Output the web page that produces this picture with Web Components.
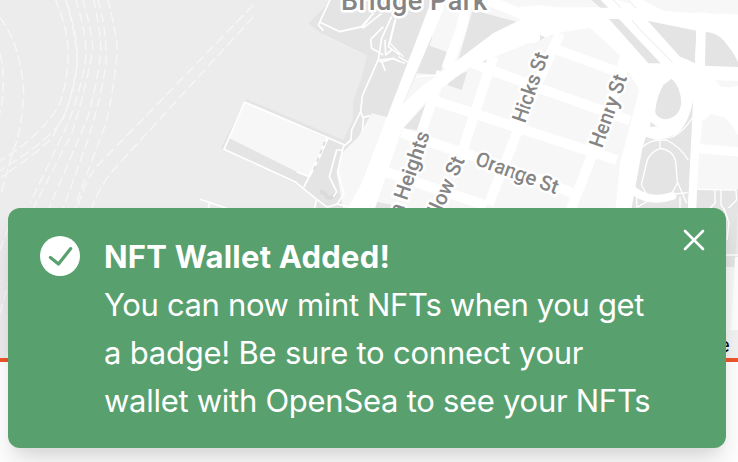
<!DOCTYPE html>
<html lang="en"><head><meta charset="utf-8"><title>Wallet notification</title>
<style>html,body{margin:0;width:738px;height:462px;overflow:hidden;background:#fff}</style></head>
<body>
<app-screen><street-map slot="map"></street-map>
<toast-message slot="toast"><span slot="title">NFT Wallet Added!</span><toast-line style="--ls:-.35px">You can now mint NFTs when you get</toast-line><toast-line style="--ls:-.22px">a badge! Be sure to connect your</toast-line><toast-line style="--ls:-.28px">wallet with OpenSea to see your NFTs</toast-line></toast-message>
</app-screen>
<script>
const define=(name,html)=>customElements.define(name,class extends HTMLElement{
  constructor(){super();this.attachShadow({mode:'open'}).innerHTML=html}
});
define('app-screen',`<style>:host{display:block;position:relative;width:738px;height:462px;overflow:hidden;background:#fff}
.map{height:358px;overflow:hidden}.rule{height:4px;background:#ee562b}.toast{position:absolute;left:8px;top:208px}</style>
<div class="map"><slot name="map"></slot></div><div class="rule"></div><div class="toast"><slot name="toast"></slot></div>`);
define('toast-line',`<style>:host{display:block;white-space:nowrap;letter-spacing:var(--ls)}</style><slot></slot>`);
define('toast-message',`<style>:host{display:grid;grid-template-columns:40px 1fr 24px;column-gap:24px;box-sizing:border-box;width:718px;height:240px;padding:25px 20px 23px 32px;border-radius:12px;background:#59a06f;color:#fff;font:400 31px/48px Inter,sans-serif;box-shadow:0 20px 30px -4px rgba(0,0,0,.12),0 8px 12px -4px rgba(0,0,0,.06)}
.icon{margin-top:3px;width:40px;height:40px}.title{font-weight:700;font-size:31px;letter-spacing:.24px;white-space:nowrap;height:48px}
.copy{min-width:0}button{all:unset;width:24px;height:24px;margin-top:-5px;}svg{display:block}</style>
<svg class="icon" viewBox="0 0 40 40"><circle cx="20" cy="20" r="20" fill="#fff"/><path d="M10.4 21.4 18.5 28 30.7 12.6" fill="none" stroke="#59a06f" stroke-width="3.2" stroke-linecap="round" stroke-linejoin="round"/></svg>
<div class="copy"><div class="title"><slot name="title"></slot></div><slot></slot></div>
<button aria-label="Close"><svg width="24" height="24" viewBox="0 0 24 24"><path d="M3 3 21 21M21 3 3 21" stroke="#fff" stroke-width="2.6" stroke-linecap="round"/></svg></button>`);
define('street-map',`<style>:host{display:block;width:738px;height:358px;background:#ececec}svg{display:block}
.p{fill:#e4e4e4}.l{fill:#f7f7f7}.w{fill:#fff}.r{fill:none;stroke:#fff;stroke-linejoin:round}.t{stroke-width:4}.d{fill:none;stroke:#f7f7f7;stroke-width:4;stroke-dasharray:30 13}
text{font-family:Roboto,sans-serif;font-weight:500;fill:#858585;stroke:#fff;stroke-width:5;stroke-linejoin:round;paint-order:stroke}</style>
<svg width="738" height="358" viewBox="0 0 738 358">
<g transform="scale(.33333)">
<g class="d">
<path d="M165-5Q210 100 204 180Q200 260 175 320Q110 420 0 482"/>
<path d="M195-5Q225 85 232 180Q228 260 190 355Q150 420 0 512"/>
<path d="M201 10Q235 110 232 190Q220 270 195 340L155 415Q110 460 5 530"/>
<path d="M226-5Q260 100 258 170Q240 290 195 390L90 610"/>
<path d="M247-5Q280 110 278 150Q250 300 215 400L95 635"/>
<path d="M280-5Q305 110 302 160Q290 260 262 355L145 630"/>
<path d="M293-5Q322 100 318 190Q300 310 260 430L188 630"/>
<path d="M322-5Q350 100 352 150Q340 280 318 370L235 590 225 630"/>
<path d="M0 52Q60 130 71 270Q65 400 40 450L0 590M0 160Q20 240 0 340"/>
<path d="M760 15 290 500Q250 550 232 630M760 50 340 510Q290 570 272 640"/>
<path d="M0 750 40 640M0 940 45 780M20 1075 50 980"/>
</g></g>
<g transform="translate(200) scale(.33333)">
<path class="p" d="M395 0 325 70 370 105 500 172 483 240 460 300 458 360 430 420 140 297 62 445 285 550 350 600 350 640 800 640 800 0Z"/>
<path d="M370 105 500 168" stroke="#f3f3f3" stroke-width="3"/>
<path class="l" d="M134 306 382 416 327 530 290 515 88 415Z"/>
<path class="r t" style="stroke-width:5" d="M436 436 134 306 72 448 285 545 350 598 382 622M330 525 311 562M290 515 327 530"/>
<path d="M382 416 358 470 327 530" fill="none" stroke="#fff" stroke-width="8"/><path d="M375 425 340 512" stroke="#dedede" stroke-width="6" stroke-dasharray="13 13"/>
<path d="M360 575Q375 575 380 590Q395 600 407 580" fill="none" stroke="#dadada" stroke-width="12"/>
<path class="l" d="M515 340 800 410 800 640 432 640 410 520 425 460 475 410Z"/>
<path class="r t" style="stroke-width:5" d="M390 0 355 75 370 92M360 67 420 95 488 80 520 40M488 85 545 40M575 50 545 115 535 178 487 288 482 335 455 390 453 420 430 440 413 515 432 580 412 612 382 622M425 450 410 450 388 530 410 575 400 590M482 335 490 355 487 395M488 353 510 347M550 80 512 118 515 145 550 165M585 60 565 140 600 165M555 120 557 165 575 150M535 180 545 186 580 175 600 185M545 185 556 213M412 612 442 620M0 598 80 625M30 606 23 630M350 600 342 630"/>
</g>
<g transform="translate(340) scale(.33333)">
<path class="l" d="M285 0H1200V640H80L190 310 275 120Z"/>
<path class="p" d="M263 135 320 155 300 225 232 220ZM398 30 530 65 460 100 355 180ZM322 255 345 225 382 215 365 270ZM278 290 190 385 250 392ZM402 190 450 172 440 203ZM195 410 245 400 240 415ZM110 605 185 620 180 640H100Z"/>
<path class="w" d="M275 0H318L303 45 275 110 188 312 245 260 340 190 460 100 530 65 600 40V110L530 145 450 175 385 205 270 290 185 390 100 640H15L65 550Z"/>
<path class="r" style="stroke-width:32" d="M382 0 363 90 320 205"/>
<path class="r" style="stroke-width:30" d="M430-5 600 65M305 215 245 395M460 170 370 445M660 100 570 300 445 615M400 190 600 265 870 362M285 302 600 405 830 480M185 398 270 427 420 475M590 535 700 580M135 515 440 617"/>
<path class="r" style="stroke-width:4" d="M175 170 210 190M228 233 240 229 300 225M120 180 155 175 195 190M170 45 150 130 190 170M100 40 65 78M0 94 65 80"/>
</g>
<g transform="translate(540) scale(.33333)">
<path class="w" d="M-60 20 0 16 60 22 155 0H310L370 32 600 42V500H480L445 640H225L240 490 298 270 262 210 230 200 240 165 150 83 45 100-20 130H-60Z"/>
<path class="l" d="M0 0H150L175 22H60L0 10ZM230 0H260L275 12ZM310 0H470V40L370 32ZM500 0H552L550 42 500 40ZM572 0H600V44L570 42ZM515 240 600 243V255L570 262 535 260ZM488 360Q515 350 515 330 570 350 600 420V442L480 432ZM477 460 600 470V640H465Z"/>
<path class="p" d="M153 0H182L205 23H180ZM207 57H237L362 190H325ZM323 62 469 92 465 190 445 180 420 170ZM497 95Q530 98 550 120L600 185V201L495 197ZM395 236Q422 260 424 310 417 357 372 358 343 350 346 330 350 290 370 255ZM332 365 345 376 358 380 330 380ZM318 410 350 420 405 405Q445 380 462 290L443 640H272L308 440ZM470 568H600V640H468ZM0 105 15 112 0 122Z"/>
<path class="r" style="stroke-width:18" d="M325 390Q405 390 430 345Q450 310 430 240"/>
<path class="w" d="M460 290H483L468 640H443ZM470 90H496L494 205H464Z"/>
<path class="r" style="stroke-width:26" d="M520 75Q560 100 585 140L610 190"/>
<path class="r" style="stroke-width:30" d="M40 145 240 218M255 190 205 340 92 630"/>
<path class="r" style="stroke-width:24" d="M500 220Q550 310 600 280M480 320 550 340"/>
<path class="r t" d="M318 405Q360 420 400 410 435 390 460 350M305 443Q330 420 360 420H380Q420 440 445 480M360 420V445M360 445Q325 460 320 487L304 555M360 445Q400 450 407 485L412 545 440 610M304 555 330 600M412 550 385 600M403 582 443 578M290 580V620M290 622 330 600M420 590V630M470 568 588 570 590 600 550 640M525 570V610L510 625M543 570V615L560 640"/>
<path class="r" style="stroke-width:24;stroke-linecap:round" d="M282 573Q330 610 397 588"/>
<path d="M220 0 242 23M265 0 290 25M275 60 291 78M290 78 397 187" fill="none" stroke="#ddd" stroke-width="2"/>
</g>
<path class="p" d="M724 208H738L735 267H724Z"/><path class="l" d="M724 267H735L731 330H724Z"/><path class="w" d="M735 257 738 257V330H731Z"/><path class="r" style="stroke-width:1.3" d="M724 208 729 223 727 240M724 255H738"/>
<text x="341" y="9.5" font-size="27" textLength="146">Bridge Park</text>
<g font-size="20.5"><text transform="translate(525 124) rotate(-71)" textLength="73">Hicks St</text>
<text transform="translate(602 149) rotate(-70.5)" textLength="76">Henry St</text>
<text transform="translate(474 164.5) rotate(20)" textLength="87">Orange St</text>
<text text-anchor="end" transform="translate(430 134) rotate(-71)">a Heights</text>
<text text-anchor="end" transform="translate(465 160) rotate(-66)">llow St</text></g>
<path d="M724 330H738V358H724Z" fill="#f3f3f3"/><text x="719" y="352" font-size="20" style="fill:#111;stroke:none;font-weight:400">e</text>
</svg>`);
</script></body></html>
